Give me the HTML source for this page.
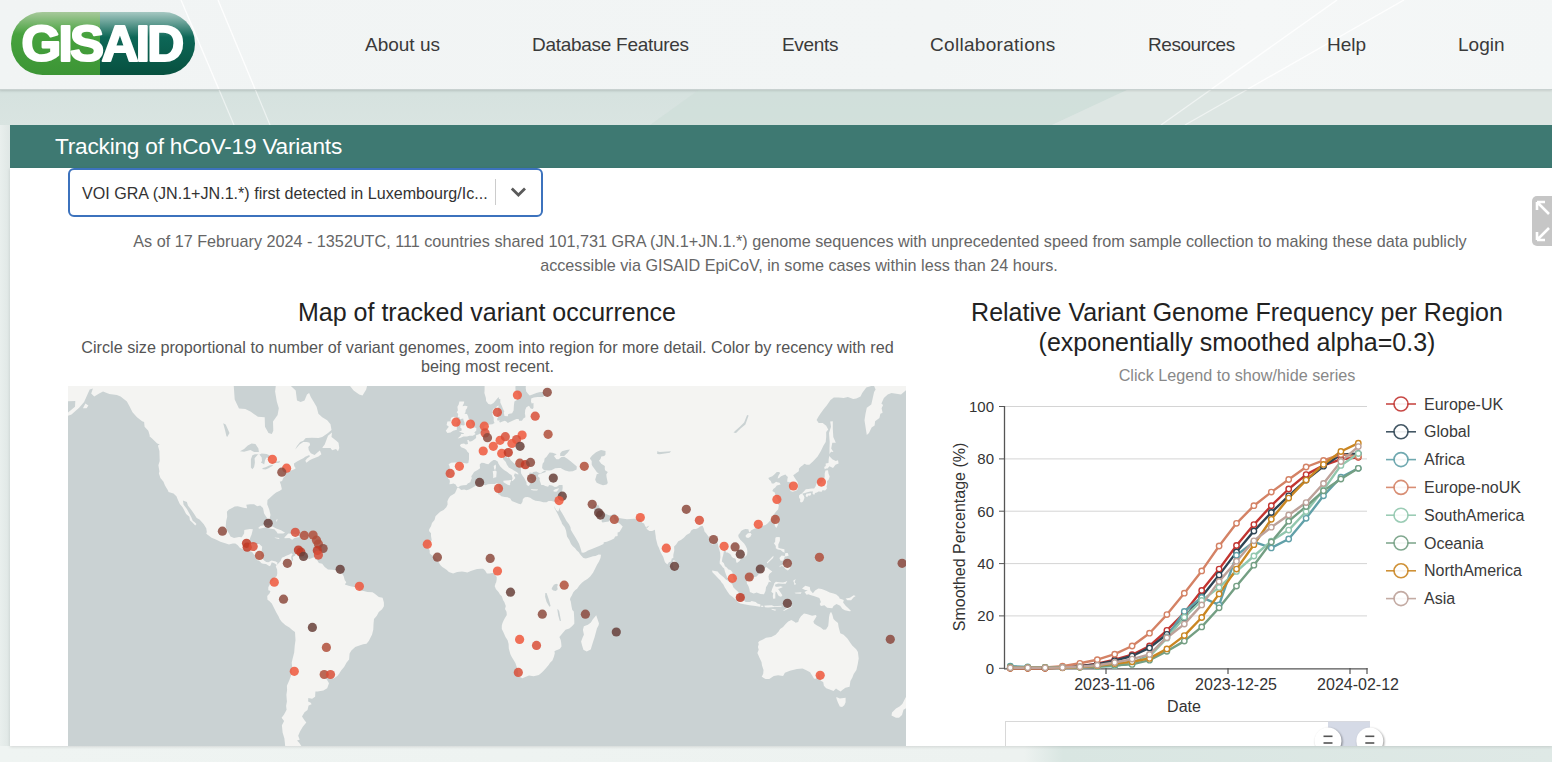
<!DOCTYPE html>
<html><head><meta charset="utf-8">
<style>
*{margin:0;padding:0;box-sizing:border-box}
html,body{width:1552px;height:762px;overflow:hidden}
body{font-family:"Liberation Sans",sans-serif;background:#e3ebe9;position:relative}
.abs{position:absolute}
#bg{left:0;top:0;width:1552px;height:762px}
#hdr{left:0;top:0;width:1552px;height:90px;background:linear-gradient(100deg,#f1f4f4 0%,#f2f5f5 60%,#f5f7f7 80%,#f3f6f6 100%);border-bottom:1px solid #c8d1d0;box-shadow:0 1px 2px rgba(0,0,0,.1)}
.nav{top:34px;font-size:19px;color:#3a3a3a;white-space:nowrap;line-height:22px}
#logo{left:11px;top:12px;width:184px;height:63px;border-radius:32px;overflow:hidden}
#teal{left:10px;top:125px;width:1542px;height:43px;background:#3e7972}
#ttl{left:55px;top:133.5px;font-size:22.6px;letter-spacing:-0.2px;color:#fff;line-height:26px;white-space:nowrap}
#panel{left:10px;top:168px;width:1542px;height:578px;background:#fff;box-shadow:0 1px 3px rgba(0,0,0,.12)}
#dd{left:67.5px;top:167.5px;width:475.5px;height:49px;border:2.2px solid #3c72bd;border-radius:6px;background:#fff}
#ddt{left:82px;top:184px;font-size:16.1px;color:#333;white-space:nowrap;line-height:18px}
#ddsep{left:495px;top:179px;width:1px;height:26px;background:#ccc}
#exp{left:1532px;top:196px;width:30px;height:50px;border-radius:5px;background:#c6c6c6}
.desc{font-size:16.2px;color:#666;white-space:nowrap;line-height:18px;text-align:center}
.h2{font-size:25px;color:#222;white-space:nowrap;line-height:28px;text-align:center}
.sub{font-size:16.2px;color:#555;white-space:nowrap;line-height:19px;text-align:center}
#map{left:68px;top:386px;width:838px;height:360px;background:#cad2d3;overflow:hidden}
</style></head>
<body>
<div class="abs" style="left:0;top:89px;width:1552px;height:36px;background:linear-gradient(180deg,#ccd9d6 0,#d6e2df 5px,#d9e4e1 100%)"></div>
<div class="abs" style="left:0;top:125px;width:10px;height:637px;background:linear-gradient(90deg,#e9efed 0,#dfe7e5 100%)"></div>
<div class="abs" style="left:0;top:746px;width:1552px;height:16px;background:linear-gradient(90deg,#eff4f2 0,#edf2f0 66%,#d9e6e2 68.5%,#dfe9e6 100%)"></div>
<svg class="abs" style="left:0;top:0" width="1552" height="762">
 <path d="M700,89 L1129,89 L1052,125 L650,125Z" fill="#cfdeda" opacity="0.8"/><path d="M1129,89 L1052,125 L1552,125 L1552,89Z" fill="#dde6e3"/>
 <line x1="181" y1="0" x2="234" y2="125" stroke="#fff" stroke-width="1.2" opacity="0.55"/>
 <line x1="218" y1="0" x2="270" y2="125" stroke="#fff" stroke-width="1.2" opacity="0.55"/>
 <line x1="1337" y1="0" x2="1161" y2="125" stroke="#fff" stroke-width="1.2" opacity="0.55"/>
 <line x1="1404" y1="0" x2="1185" y2="125" stroke="#fff" stroke-width="1.2" opacity="0.55"/>
</svg>
<div id="hdr" class="abs"></div>
<svg class="abs" style="left:0;top:0" width="1552" height="89">
 <line x1="181" y1="0" x2="218.7" y2="89" stroke="#fff" stroke-width="1.3" opacity="0.9"/>
 <line x1="218" y1="0" x2="255" y2="89" stroke="#fff" stroke-width="1.3" opacity="0.9"/>
 <line x1="1337" y1="0" x2="1211.6" y2="89" stroke="#fff" stroke-width="1.3" opacity="0.9"/>
 <line x1="1404" y1="0" x2="1248" y2="89" stroke="#fff" stroke-width="1.3" opacity="0.9"/>
</svg>
<div id="logo" class="abs">
 <svg width="184" height="63" viewBox="0 0 184 63">
  <defs>
   <linearGradient id="lg1" x1="0" y1="0" x2="0" y2="1">
    <stop offset="0" stop-color="#a7c99b"/><stop offset="0.35" stop-color="#47a23e"/><stop offset="1" stop-color="#3c9535"/>
   </linearGradient>
   <linearGradient id="lg2" x1="0" y1="0" x2="0" y2="1">
    <stop offset="0" stop-color="#a6c8c2"/><stop offset="0.4" stop-color="#0d6757"/><stop offset="1" stop-color="#07503f"/>
   </linearGradient>
  </defs>
  <rect x="0" y="0" width="89" height="63" fill="url(#lg1)"/>
  <rect x="89" y="0" width="95" height="63" fill="url(#lg2)"/>
  <text x="10.5" y="48.6" font-family="Liberation Sans" font-weight="bold" font-size="50" fill="#fff" stroke="#fff" stroke-width="2.2" stroke-linejoin="round" letter-spacing="-2.6" textLength="160" lengthAdjust="spacingAndGlyphs">GISAID</text>
 </svg>
</div>
<div class="abs nav" style="left:365px">About us</div>
<div class="abs nav" style="left:532px;letter-spacing:-0.28px">Database Features</div>
<div class="abs nav" style="left:782px;letter-spacing:-0.3px">Events</div>
<div class="abs nav" style="left:930px;letter-spacing:0.3px">Collaborations</div>
<div class="abs nav" style="left:1148px;letter-spacing:-0.45px">Resources</div>
<div class="abs nav" style="left:1327px">Help</div>
<div class="abs nav" style="left:1458px">Login</div>

<div id="teal" class="abs"></div>
<div id="ttl" class="abs">Tracking of hCoV-19 Variants</div>
<div id="panel" class="abs"></div>
<div id="dd" class="abs"></div>
<div id="ddt" class="abs">VOI GRA (JN.1+JN.1.*) first detected in Luxembourg/Ic...</div>
<div id="ddsep" class="abs"></div>
<svg class="abs" style="left:510px;top:186px" width="17" height="12" viewBox="0 0 17 12"><path d="M1.8 2.6 L8.4 9 L15 2.6" stroke="#5a5a5a" stroke-width="2.8" fill="none"/></svg>
<div id="exp" class="abs"></div>
<svg class="abs" style="left:1532px;top:196px" width="20" height="50" viewBox="0 0 20 50"><g stroke="#fff" stroke-width="2.6" fill="none"><path d="M5 6 L17 18 M5 6 L5 14 M5 6 L13 6"/><path d="M5 44 L17 32 M5 44 L5 36 M5 44 L13 44"/></g></svg>

<div class="abs desc" style="left:0;width:1600px;top:232px">As of 17 February 2024 - 1352UTC, 111 countries shared 101,731 GRA (JN.1+JN.1.*) genome sequences with unprecedented speed from sample collection to making these data publicly</div>
<div class="abs desc" style="left:0;width:1598px;top:255.5px">accessible via GISAID EpiCoV, in some cases within less than 24 hours.</div>

<div class="abs h2" style="left:287px;width:400px;top:298px">Map of tracked variant occurrence</div>
<div class="abs sub" style="left:0;width:975px;top:338px">Circle size proportional to number of variant genomes, zoom into region for more detail. Color by recency with red</div>
<div class="abs sub" style="left:0;width:975px;top:357px">being most recent.</div>

<div id="map" class="abs"><svg width="838" height="360" viewBox="0 0 838 360" style="position:absolute;left:0;top:0"><g><path d="M-36.8,-93.9 -19.2,-24.8 -11.6,-15.8 -1.5,-15.8 -11.6,-5.0 -14.1,0.9 -5.3,9.1 -3.5,15.5 7.3,15.1 7.0,20.8 -1.5,27.7 -10.3,33.4 3.5,28.6 11.1,21.7 16.1,16.0 19.9,7.6 21.7,3.5 24.9,2.5 23.2,7.6 26.2,10.6 31.2,7.6 35.0,5.6 41.3,8.1 48.9,9.1 52.6,10.6 58.9,15.5 61.5,20.3 64.5,26.3 69.0,31.2 74.1,35.2 76.1,36.0 76.6,40.7 80.3,44.8 81.6,48.9 82.9,50.9 87.9,54.8 91.7,58.6 89.9,59.4 91.4,65.0 91.7,75.0 90.4,79.2 91.4,85.3 90.9,87.6 92.4,91.9 95.5,95.7 97.0,99.5 100.0,104.5 100.5,106.0 105.5,107.5 108.6,110.6 109.1,112.1 110.3,114.7 111.8,118.0 114.4,120.9 116.6,124.9 118.1,128.0 121.4,130.8 121.9,134.2 124.7,136.7 127.2,139.4 128.5,138.0 126.2,135.8 124.9,135.0 123.2,131.1 121.2,127.2 118.9,122.9 115.6,118.8 114.9,114.4 118.9,115.9 119.9,119.4 123.2,123.8 125.7,127.2 128.7,132.0 131.5,133.6 135.8,138.3 138.3,142.4 138.8,145.9 138.3,147.8 141.3,149.9 143.6,151.8 148.4,153.7 152.4,155.8 157.2,157.3 161.0,158.6 164.7,157.6 167.3,157.6 169.8,159.2 171.8,161.8 174.8,163.3 178.6,164.4 182.4,165.2 184.1,165.9 185.6,168.0 187.9,170.6 188.2,172.6 189.7,174.4 190.9,174.4 193.5,177.2 195.2,177.7 198.0,178.0 201.5,180.3 202.5,179.5 203.8,176.2 206.8,177.5 208.6,179.0 209.6,176.7 207.8,175.4 203.5,174.4 200.5,176.2 198.2,175.9 196.2,174.4 194.0,172.1 192.9,169.5 193.5,166.4 194.2,160.7 191.2,158.1 187.4,157.9 182.9,158.1 181.6,158.6 181.6,153.9 182.4,151.3 183.6,148.6 184.9,143.2 181.9,143.0 176.3,144.0 176.1,147.5 173.8,151.3 171.0,151.0 166.0,152.1 162.5,150.5 161.0,147.5 158.9,144.3 157.7,140.5 158.2,135.0 159.2,130.8 158.9,125.8 160.7,123.8 164.5,121.7 166.7,120.6 169.8,120.3 173.6,121.2 176.8,122.0 179.1,122.3 178.3,118.8 182.1,118.3 186.1,118.3 189.2,120.3 192.2,119.4 195.0,122.0 195.7,125.2 196.0,127.2 198.0,130.6 199.7,133.1 201.5,133.1 202.5,128.9 201.3,123.8 199.2,118.3 199.5,114.1 202.0,111.8 205.0,109.0 208.1,106.6 211.8,104.8 213.9,103.2 212.8,98.6 211.8,95.7 214.1,95.1 215.1,92.2 217.4,89.6 217.6,86.9 220.2,85.6 223.9,84.3 226.4,83.3 227.7,82.3 226.2,79.9 225.9,77.5 229.0,75.4 232.7,73.6 235.3,72.2 237.3,70.8 241.3,69.0 241.8,70.4 239.0,72.6 237.3,74.7 238.5,76.8 241.6,74.3 244.1,72.9 247.9,71.5 250.4,70.4 253.4,68.3 251.9,64.6 249.1,66.8 246.6,69.0 242.8,67.2 240.8,64.2 240.3,60.9 242.1,59.0 241.6,56.7 238.8,55.9 235.3,55.9 231.5,58.6 227.2,63.5 229.0,60.1 232.2,55.9 235.3,54.8 237.8,52.0 244.1,51.7 250.4,52.0 254.2,50.9 259.7,47.3 263.5,44.0 262.5,38.2 259.2,34.3 254.2,31.2 250.4,27.7 248.6,20.8 245.8,16.0 242.8,11.1 241.1,7.1 239.0,8.6 236.5,14.6 232.7,16.0 229.0,14.6 227.7,4.5 222.7,-0.2 215.1,-3.4 207.6,-4.5 202.5,-51.8 252.9,-93.9ZM254.4,61.6 256.7,58.6 258.4,54.0 260.0,49.7 264.0,46.5 263.5,50.9 268.0,54.4 270.5,56.7 271.3,62.0 270.0,65.3 268.0,63.1 264.2,64.2 262.5,62.0 254.7,62.0ZM208.6,179.0 210.6,177.2 212.6,174.9 213.9,171.8 216.4,170.8 217.6,170.0 221.4,168.5 223.2,167.2 224.7,168.2 223.4,170.3 223.2,172.1 223.9,175.4 225.2,173.9 224.7,171.1 227.2,169.5 227.7,167.7 229.7,169.5 232.7,171.8 237.8,171.8 241.6,172.9 245.3,171.6 248.1,171.6 246.6,172.9 249.1,173.9 250.9,177.0 254.2,177.7 256.7,181.0 260.0,183.6 264.2,183.8 268.0,184.3 271.8,186.1 274.3,187.9 275.6,189.9 276.8,194.2 278.3,196.2 276.8,198.4 280.6,199.7 283.6,200.5 288.2,201.2 291.9,204.5 295.7,205.0 299.5,206.0 304.5,206.3 307.1,208.0 310.8,211.1 314.6,211.8 315.9,216.4 315.9,220.2 314.1,223.3 310.8,226.1 308.8,229.7 306.0,233.0 305.5,238.2 305.3,243.5 304.0,248.8 302.8,250.9 300.8,255.0 298.5,257.7 295.2,258.3 291.4,259.4 287.2,261.0 283.4,264.6 281.6,267.4 281.1,273.4 278.6,276.5 276.1,280.9 273.1,284.5 271.3,287.4 269.3,289.9 265.7,292.6 262.5,292.6 258.4,291.4 256.7,290.5 259.4,294.5 261.0,297.3 259.2,302.3 255.4,304.6 249.6,305.5 247.4,305.5 247.1,310.8 244.1,312.8 240.3,312.1 240.1,315.5 242.8,316.8 243.6,318.2 240.6,319.6 239.5,324.1 236.5,326.3 234.0,330.6 236.5,334.3 238.3,336.5 234.8,340.7 232.0,345.4 230.2,349.7 231.7,353.8 229.0,354.6 231.2,356.7 234.0,361.0 239.8,364.0 237.8,388.8 220.2,388.8 216.4,352.6 214.6,346.5 213.9,339.2 216.1,335.0 213.6,331.7 215.9,328.8 218.6,323.8 218.1,319.9 218.9,315.5 218.4,308.8 219.1,303.9 218.9,299.8 221.2,294.5 222.9,289.9 223.7,286.8 224.2,280.9 223.7,276.8 224.7,272.2 226.2,266.6 226.7,259.9 227.5,254.2 227.0,245.9 224.2,244.0 221.4,241.6 217.6,239.3 213.9,236.1 211.8,233.3 210.6,230.4 208.3,226.6 205.8,221.5 203.8,217.6 201.3,215.1 199.5,213.8 199.2,210.0 201.5,207.5 202.5,205.0 200.3,204.2 200.3,201.2 202.3,197.4 202.5,196.2 205.0,194.4 206.0,192.4 208.8,189.9 209.3,187.4 209.1,183.6 207.8,180.5 208.6,179.0ZM294.5,9.6 298.2,3.5 300.8,-7.2 303.3,-18.7 328.5,-51.8 252.9,-152.9 265.5,-51.8 275.6,-18.7 280.6,-1.8 285.6,4.5 291.2,8.6ZM190.2,142.1 192.4,140.0 197.5,138.9 201.3,139.1 205.0,140.8 208.8,142.7 213.1,144.3 217.1,146.7 215.1,147.5 209.6,147.5 208.6,145.7 206.3,143.2 201.3,142.4 198.0,141.3 195.0,141.9 191.4,142.7ZM216.4,151.5 220.2,147.5 223.4,147.8 227.7,148.1 230.2,149.4 231.7,151.0 229.0,151.5 226.4,152.1 224.2,153.7 221.4,152.1 216.6,152.3ZM206.5,151.5 211.8,152.1 210.6,153.1 207.1,152.1ZM234.5,151.3 238.8,151.5 238.3,152.6 234.8,152.6ZM416.4,-93.9 416.6,-1.8 416.6,3.5 416.4,7.1 417.9,12.1 418.1,15.1 420.4,17.9 422.9,18.4 425.5,17.0 428.0,14.1 430.5,11.1 431.2,13.1 432.3,13.1 432.3,16.5 434.0,20.3 434.8,22.6 436.3,25.4 435.8,26.8 436.5,29.9 439.8,30.3 440.3,28.1 444.1,27.2 445.6,24.5 445.9,19.4 446.4,15.5 448.9,14.1 450.9,11.1 449.9,7.6 447.6,5.1 447.4,1.4 447.9,-3.4 450.6,-7.2 455.2,-11.2 458.2,-16.4 460.7,-23.6 465.8,-23.6 467.8,-19.3 468.0,-15.8 466.0,-12.9 462.0,-8.9 458.2,-5.6 457.7,1.9 458.2,5.6 460.2,8.1 461.7,9.6 464.5,8.6 468.3,7.1 472.1,6.1 475.1,6.1 477.8,8.6 480.1,9.1 477.1,9.6 474.6,11.1 469.5,11.1 465.8,11.6 463.2,12.6 463.0,15.5 463.7,17.5 465.5,17.0 465.5,21.7 464.7,23.1 462.7,22.6 461.0,19.8 458.4,21.2 457.2,24.0 456.9,27.7 457.2,29.0 457.4,31.2 455.4,32.6 453.9,34.7 451.1,34.7 450.6,33.0 448.4,33.0 445.6,34.3 441.8,36.0 439.8,36.9 438.3,35.6 436.8,34.7 434.5,35.6 432.3,36.4 431.2,36.0 431.7,34.3 429.7,34.7 429.0,33.0 430.2,31.2 428.7,29.5 430.0,26.8 431.5,25.9 430.0,24.5 430.2,21.7 430.7,19.4 429.0,20.3 427.7,22.6 425.7,22.6 424.7,24.0 424.4,27.7 424.7,29.9 425.7,31.7 425.7,34.7 426.5,36.9 424.4,38.2 421.7,38.6 419.4,38.6 416.6,39.8 415.9,42.8 414.4,44.8 412.6,47.3 410.3,48.5 408.1,49.3 408.1,52.0 406.6,53.2 404.5,54.8 402.8,55.6 400.8,55.2 400.8,54.0 399.3,54.0 400.0,57.9 397.7,58.6 396.0,57.5 393.0,57.9 391.9,59.4 393.2,61.3 396.5,62.4 398.5,63.9 399.0,65.3 401.0,67.2 401.0,69.7 401.0,73.3 400.3,77.1 398.5,77.5 394.5,76.8 390.2,76.4 386.4,76.4 383.1,76.8 380.6,78.2 381.6,80.6 381.9,83.6 382.1,86.9 380.1,90.9 380.1,92.8 381.6,93.5 381.9,95.4 381.4,98.2 383.4,97.9 385.4,97.6 387.7,98.6 388.4,100.1 389.9,101.4 392.5,99.8 395.2,99.2 398.5,98.9 400.0,97.3 402.3,96.3 403.0,93.8 403.8,92.2 403.3,90.2 404.5,88.6 406.1,85.9 407.8,84.9 409.6,83.9 412.1,82.3 411.8,80.2 411.8,78.2 413.6,76.8 416.1,77.1 417.9,77.8 420.4,78.2 422.9,75.7 425.5,74.0 427.2,74.0 429.7,75.4 430.5,77.8 432.3,80.6 434.8,82.9 436.8,84.6 439.3,85.9 441.6,87.9 443.6,88.9 444.6,92.2 443.6,95.1 444.6,95.1 445.9,93.8 447.4,91.9 445.9,89.6 446.9,87.3 450.1,88.6 450.6,87.9 449.1,86.3 445.9,84.6 444.1,83.3 440.8,81.6 438.8,78.5 437.8,76.1 435.0,72.9 435.3,70.1 437.3,69.0 438.8,69.3 438.3,71.1 439.3,72.2 440.6,70.8 442.6,74.0 445.4,76.8 447.6,78.5 450.6,80.6 452.9,82.3 452.9,85.3 453.2,87.6 454.7,89.9 456.2,91.9 457.2,94.1 458.4,96.3 458.7,98.9 460.7,100.1 462.0,98.2 461.5,96.3 463.2,97.0 464.5,95.1 463.0,93.5 461.0,92.2 462.7,90.9 461.2,87.9 461.7,86.6 464.2,86.9 465.3,85.9 468.3,85.6 470.3,86.6 471.3,87.3 472.8,87.3 475.1,85.6 477.3,84.6 477.8,85.9 473.3,87.6 470.3,88.6 469.8,90.2 471.8,91.9 471.5,93.8 472.6,97.0 473.3,98.9 475.3,98.9 477.3,100.1 480.1,100.8 481.1,98.9 484.1,99.5 486.7,101.1 488.9,100.8 491.2,98.9 494.5,98.9 494.7,101.4 494.5,103.2 493.7,106.9 492.7,110.3 492.0,112.1 490.9,114.7 490.2,115.9 487.4,116.2 485.4,115.6 483.4,115.0 480.6,115.0 478.6,116.2 475.3,116.2 471.8,115.3 467.5,114.7 464.7,113.5 462.2,111.8 459.5,110.9 456.9,111.2 454.9,112.9 454.4,115.9 452.9,118.3 450.6,117.7 447.6,116.5 443.8,115.0 442.3,112.6 439.6,111.2 436.8,110.9 433.3,110.3 431.7,108.7 430.0,108.1 430.0,106.6 431.5,103.6 431.0,102.3 430.0,100.1 431.7,97.9 429.7,97.6 428.7,97.3 426.7,97.9 422.7,97.9 419.9,98.2 417.4,99.2 413.9,98.6 410.6,99.5 407.6,99.8 404.3,101.7 401.0,103.6 398.5,104.2 396.2,103.6 393.2,103.9 390.7,101.7 389.2,102.0 388.2,104.5 386.9,107.2 384.6,108.7 382.4,110.0 380.6,112.4 379.4,115.3 379.6,118.5 378.3,121.2 375.6,124.0 372.6,125.5 370.8,126.9 367.5,130.3 366.5,133.9 364.0,136.9 363.0,140.2 361.2,143.2 361.0,145.1 363.0,147.3 363.0,149.9 363.7,153.9 362.7,156.5 360.7,160.7 360.0,161.3 361.7,164.4 361.7,167.2 363.5,169.0 365.5,170.3 367.5,172.1 369.8,173.9 370.5,175.9 372.3,179.0 374.3,181.0 376.3,182.3 378.8,184.1 380.9,186.1 385.1,187.6 389.2,186.1 394.0,185.6 397.2,186.1 399.3,186.6 402.8,185.1 406.6,183.8 409.1,183.1 412.9,182.8 415.1,182.8 417.1,184.6 418.9,187.6 421.4,187.6 424.2,187.1 425.7,187.1 427.2,188.9 428.7,190.9 428.7,193.2 428.2,196.2 427.5,197.4 426.7,200.2 428.0,203.2 430.5,206.0 432.0,208.5 433.8,210.3 434.8,213.3 435.0,214.1 436.3,216.1 437.8,219.9 437.0,223.0 438.5,225.8 438.8,228.9 436.5,232.8 435.5,234.8 434.5,236.9 433.8,239.5 433.8,243.0 435.3,246.1 437.5,250.9 439.6,254.2 440.6,258.0 440.8,262.4 442.3,268.0 443.6,270.8 445.6,273.9 447.4,277.1 448.4,280.0 449.9,283.9 450.1,287.1 450.4,290.2 452.9,291.4 454.4,292.3 457.2,291.1 461.0,289.6 465.5,290.2 468.8,289.6 470.8,289.0 473.3,287.1 475.6,284.8 478.1,282.1 480.6,279.1 482.1,276.8 484.4,274.5 485.9,270.8 486.9,266.8 486.2,265.7 487.7,264.6 491.7,262.9 493.5,260.5 493.2,256.9 492.7,253.9 491.4,250.9 494.5,247.2 497.5,243.7 501.3,242.4 504.0,240.3 506.3,237.7 506.3,234.6 506.1,230.2 505.8,225.6 504.3,224.0 503.5,220.2 503.0,217.1 502.8,215.4 502.0,213.8 502.3,212.1 503.8,209.5 505.3,206.3 507.3,204.0 509.1,202.7 511.3,199.5 513.9,196.7 516.4,194.7 519.4,192.9 522.2,190.4 525.0,186.8 527.2,182.5 529.0,178.7 531.0,175.4 532.5,172.1 533.0,168.8 530.7,168.5 527.5,170.0 525.0,170.3 521.2,171.6 517.9,172.4 515.4,172.1 513.1,169.5 512.1,168.2 510.6,165.9 508.8,164.4 507.1,162.3 504.8,160.2 503.0,158.1 501.3,153.9 499.0,150.5 498.0,144.6 496.7,141.3 494.0,137.8 493.5,136.1 492.2,133.6 490.4,129.4 488.9,126.6 486.7,122.6 486.2,119.7 486.7,120.9 487.9,123.8 490.2,125.8 490.9,124.0 492.2,120.9 492.0,123.8 494.2,127.2 496.2,130.8 498.5,135.0 501.0,138.3 502.5,141.3 502.8,143.8 504.8,147.3 507.3,151.3 509.6,155.2 511.1,158.1 512.1,161.0 513.1,164.1 513.6,166.4 515.4,166.7 517.6,165.9 519.9,164.6 523.9,163.1 527.5,161.5 531.2,160.0 535.5,158.1 535.8,156.3 538.8,155.8 543.1,153.9 546.1,152.6 547.1,150.5 549.6,149.9 549.6,146.5 551.4,145.9 552.7,144.0 554.7,140.5 553.2,139.1 551.7,137.5 549.4,136.7 547.1,135.0 545.9,132.5 545.9,130.3 545.1,130.6 543.8,132.2 542.6,133.6 540.8,135.6 537.5,136.1 534.5,136.4 533.5,135.3 534.0,133.1 533.8,130.8 532.5,130.8 531.8,132.8 531.5,133.9 530.5,132.0 530.0,128.9 527.7,126.6 526.2,123.8 525.0,121.4 525.5,119.7 527.2,118.5 529.0,119.4 530.2,118.8 531.5,121.4 533.3,125.2 535.8,126.9 539.1,128.6 541.6,129.4 543.8,128.9 545.9,127.7 547.6,128.3 548.4,131.1 551.4,132.0 553.9,132.5 559.0,133.3 562.5,133.1 565.8,132.8 569.8,132.8 572.1,132.5 573.3,134.2 574.1,136.7 576.1,137.5 577.3,140.5 578.4,141.1 581.4,139.4 579.4,141.9 577.9,141.3 579.1,143.2 581.4,145.1 584.1,145.1 586.9,143.8 587.2,147.0 587.7,149.9 587.9,152.6 588.9,156.5 589.7,159.4 590.7,161.3 592.2,165.2 594.0,168.8 595.2,170.8 596.2,173.9 597.0,176.2 599.3,178.5 601.0,176.2 603.0,175.4 603.8,172.6 605.3,172.1 605.3,169.0 606.3,164.6 606.1,160.5 608.1,158.4 610.3,155.2 612.9,153.9 615.9,151.8 618.4,148.9 621.9,147.0 623.2,144.6 625.5,143.0 628.0,143.0 630.2,141.9 632.0,140.5 634.5,139.7 635.8,142.4 636.5,145.4 638.3,147.5 640.1,149.9 641.6,152.1 642.3,155.8 643.1,158.1 644.9,158.6 647.1,156.5 648.9,155.5 649.9,157.9 650.4,160.7 651.4,163.9 652.2,167.0 652.4,171.3 651.7,175.4 651.7,177.7 652.9,178.7 654.7,181.3 656.2,182.5 656.9,185.6 658.0,188.6 659.2,191.4 662.2,193.9 664.5,195.2 666.5,195.2 665.5,192.9 664.5,189.1 664.5,186.3 662.5,184.1 660.5,183.6 658.5,181.3 656.9,180.3 655.9,177.2 653.9,175.4 654.4,172.1 655.2,169.0 655.7,166.4 655.9,164.6 657.5,164.4 658.2,166.4 659.7,166.4 661.7,167.7 663.0,169.0 663.7,170.8 665.3,172.1 667.3,172.4 668.0,174.1 668.3,176.4 669.3,176.7 671.6,174.9 673.1,172.6 675.6,171.6 678.1,170.0 679.1,168.2 679.4,165.2 678.9,162.6 677.6,159.7 676.1,157.6 674.1,155.5 672.3,153.7 670.5,151.0 670.3,149.1 672.1,146.7 673.1,145.1 675.1,143.8 677.4,143.0 680.4,143.2 680.9,145.4 681.9,146.5 682.9,144.6 685.2,143.2 688.2,142.1 690.2,141.3 692.0,140.5 694.7,139.7 697.5,139.1 699.5,137.5 701.8,135.0 703.3,133.6 705.1,131.7 705.3,129.1 706.8,127.2 708.3,125.2 710.1,123.5 710.6,120.9 710.9,119.1 709.6,117.7 711.1,116.5 710.1,114.1 708.6,111.8 707.6,109.7 706.8,106.6 704.3,105.1 705.3,102.9 707.3,101.4 708.8,99.5 712.6,98.6 711.6,96.7 709.3,96.3 708.1,95.7 705.8,97.6 703.8,97.6 702.8,95.1 701.3,93.8 700.3,91.9 701.8,91.2 704.3,90.2 706.3,88.6 708.8,85.9 711.1,85.9 712.1,86.9 710.3,89.9 709.6,92.5 711.1,91.9 713.1,90.2 715.4,89.2 717.4,88.6 718.7,89.9 719.9,90.9 719.4,93.1 719.2,95.7 721.2,96.0 722.9,96.7 722.7,98.9 722.7,102.3 722.4,105.1 724.7,105.7 727.0,105.1 729.0,104.2 730.0,102.3 730.2,99.2 729.7,96.3 728.0,93.8 726.5,91.5 725.2,89.2 727.0,87.9 729.0,86.6 730.8,85.3 731.0,82.6 733.0,80.6 734.5,79.5 736.5,77.8 738.6,78.8 741.3,78.8 744.9,75.4 749.6,70.4 752.9,65.0 755.4,59.8 757.7,55.9 758.2,50.9 758.2,46.0 760.2,43.6 758.2,39.8 754.7,36.9 750.7,36.9 748.6,33.9 750.4,30.8 752.7,27.2 755.4,23.6 758.7,19.4 762.5,14.1 765.8,11.6 770.8,11.6 775.6,12.1 779.9,11.1 785.2,13.1 788.4,12.6 792.5,10.6 794.2,7.1 798.3,1.4 805.8,-0.7 807.6,3.5 806.1,6.1 803.3,18.4 798.8,21.7 797.5,27.7 796.5,34.3 797.8,42.8 798.8,48.9 801.0,46.9 803.6,41.5 806.6,39.4 807.1,35.2 811.4,32.1 812.4,27.7 814.6,26.8 813.6,22.2 815.1,18.9 813.4,17.5 815.9,12.1 819.7,8.6 823.5,7.1 833.0,8.6 838.8,3.5 844.9,-1.8 857.5,-18.7 882.6,-152.9ZM389.7,52.4 392.7,51.7 395.5,50.5 399.0,50.5 401.5,49.7 404.8,49.7 407.6,48.1 406.3,46.5 408.3,44.4 408.3,41.9 405.3,41.1 404.5,38.6 403.5,36.4 402.5,34.3 400.8,33.0 400.0,29.9 399.0,28.1 396.5,27.7 397.5,26.3 397.7,24.0 399.0,22.2 399.5,20.3 397.0,19.8 394.5,20.3 396.0,17.0 396.2,15.5 391.4,15.5 390.7,18.4 389.4,20.8 389.9,24.5 388.7,26.3 390.2,28.1 389.7,30.8 391.9,31.7 391.4,33.4 393.0,33.0 395.2,32.6 395.5,34.3 396.5,36.4 396.7,39.0 395.5,39.4 392.7,39.0 392.2,41.5 393.7,42.8 393.5,44.8 390.9,45.6 393.5,46.5 396.0,47.3 395.5,48.1 393.2,48.1 392.5,49.7 390.2,52.0ZM388.7,44.0 388.9,40.7 388.4,39.0 388.7,36.4 390.2,35.2 389.4,32.6 387.7,31.2 385.7,30.8 383.1,31.7 382.4,33.9 383.1,35.2 379.4,35.6 378.6,39.0 380.9,40.7 379.4,42.4 377.8,44.8 379.4,46.9 382.6,46.5 385.1,44.8 387.9,44.0ZM435.3,94.8 437.8,94.4 443.3,94.1 442.1,97.3 442.1,99.2 440.1,98.9 435.5,96.3ZM424.7,85.3 427.2,84.6 428.7,85.6 428.2,91.2 426.7,91.5 425.2,92.2 425.2,88.6ZM425.7,79.9 427.7,78.5 428.0,81.2 427.2,83.9 426.2,83.3ZM463.2,102.9 465.3,103.2 470.3,103.6 469.0,104.5 465.8,104.6 463.2,103.9ZM485.4,104.5 487.2,103.2 491.2,102.3 489.7,104.5 488.4,105.7 485.7,105.4ZM733.8,107.5 735.3,106.0 737.8,103.2 740.3,102.9 743.6,102.6 746.1,102.6 747.4,100.8 748.6,97.3 749.9,97.0 749.6,98.9 752.9,97.3 755.4,94.4 756.7,90.9 756.7,87.6 757.5,84.6 760.0,84.3 760.5,87.6 761.7,90.6 760.5,94.1 759.0,95.1 759.2,98.2 758.5,100.8 759.0,102.3 757.5,104.2 756.2,104.5 754.7,103.9 753.7,105.7 750.4,105.4 748.9,106.6 747.1,106.9 746.1,109.0 744.4,107.2 745.1,105.4 742.3,105.4 739.3,106.3 737.1,106.9 734.8,107.5 734.0,107.8ZM731.0,109.4 733.0,107.8 734.3,107.8 735.8,109.7 736.5,111.8 735.3,115.0 734.5,115.9 733.0,116.5 732.0,115.6 732.3,113.5 731.0,111.5ZM737.6,110.0 738.3,107.8 740.3,107.5 742.6,106.9 743.3,108.1 742.1,109.7 740.3,109.4 739.1,111.2ZM756.7,83.3 758.2,82.6 759.5,82.6 761.5,80.2 765.0,81.9 767.5,78.8 770.6,77.5 770.0,74.3 767.8,75.0 764.3,73.3 761.2,70.1 760.7,73.3 760.5,77.1 757.7,77.5 757.7,79.9 756.2,80.9ZM761.5,67.9 763.0,65.7 765.5,66.1 763.2,62.4 764.3,56.7 767.8,56.7 765.3,50.9 764.8,42.8 764.8,35.2 762.2,35.6 763.0,40.7 761.0,46.9 761.7,55.9 761.5,62.4ZM706.6,139.1 707.8,135.0 710.1,132.8 711.4,133.6 710.3,136.9 709.6,139.7 708.3,142.1 707.1,140.2ZM677.6,149.4 679.9,147.3 682.6,147.0 683.6,148.3 682.4,150.7 680.1,152.1 677.9,151.3ZM707.8,151.3 710.1,151.0 711.9,151.3 711.9,154.7 710.3,158.4 710.3,161.8 712.6,162.6 716.4,163.3 716.6,166.7 714.6,165.7 712.6,164.1 709.8,163.6 707.8,162.3 707.8,160.0 705.8,157.1 707.1,156.3 707.3,152.6ZM711.4,181.3 711.9,179.8 715.1,179.0 716.9,178.0 718.9,175.9 720.4,173.9 722.4,177.2 722.7,180.3 721.7,182.8 719.9,184.6 717.2,183.1 715.9,180.8 713.4,180.0ZM711.4,172.1 713.6,169.5 716.4,170.0 718.9,170.3 720.7,169.5 719.7,167.0 717.4,167.0 716.4,172.1 715.1,174.7 712.6,174.7ZM699.3,177.5 705.1,172.1 705.6,169.8 704.3,170.8 698.8,176.4ZM678.6,194.2 678.9,197.4 680.4,200.0 681.4,203.0 681.9,206.0 685.7,207.5 688.7,206.5 692.5,208.0 696.0,208.3 697.5,205.0 698.0,201.2 700.0,197.9 700.8,195.7 703.5,196.2 701.0,193.7 700.5,190.6 701.3,187.9 704.3,185.6 701.8,183.8 700.0,182.3 698.3,181.0 696.5,182.3 694.7,185.3 693.7,186.3 691.2,187.4 688.7,190.6 684.9,191.4 684.2,193.7 681.1,194.4ZM644.1,184.6 649.6,185.6 651.7,188.1 655.4,191.1 658.0,193.7 659.7,194.4 661.7,196.2 664.3,198.2 665.3,201.2 667.5,203.5 670.0,205.8 671.1,207.0 670.8,210.8 670.5,213.3 667.5,213.6 664.8,211.1 661.7,208.8 659.2,205.3 656.7,201.2 655.2,198.2 653.4,196.2 652.4,194.4 649.9,191.9 647.1,189.1 644.4,186.3ZM669.0,215.9 671.1,213.8 673.1,214.1 676.1,214.6 677.6,215.9 682.1,216.1 683.6,215.1 687.7,216.1 689.4,217.6 692.5,218.4 692.2,220.7 687.4,219.9 681.6,219.2 677.4,218.4 672.3,217.4 669.5,216.1ZM693.7,219.4 695.5,219.9 695.0,221.0 692.7,220.7ZM696.2,219.7 698.0,219.4 703.8,219.2 706.1,220.2 713.4,219.7 713.6,220.7 706.3,221.0 700.0,221.5 697.0,221.2ZM703.8,222.7 708.3,223.8 707.1,224.8 703.5,223.5ZM715.1,224.8 718.9,222.0 724.0,219.9 723.4,221.0 718.7,223.5 715.9,225.0ZM705.1,212.8 704.8,210.0 705.3,207.5 703.3,205.8 704.3,202.5 705.8,199.0 706.3,197.2 707.8,195.7 711.4,196.2 715.1,196.4 717.7,195.7 719.4,194.7 717.7,197.7 714.4,197.7 710.1,197.4 706.8,198.7 707.6,200.7 710.1,200.7 712.6,200.2 714.9,201.0 712.9,202.0 710.1,203.0 711.9,205.5 714.4,209.3 713.1,210.8 711.4,210.3 710.1,209.3 708.8,206.3 707.6,205.5 707.3,208.8 707.3,212.6ZM725.2,194.7 727.7,192.9 726.5,196.2 728.2,197.9 726.5,199.0 726.0,196.7ZM726.5,206.8 733.5,206.3 732.8,207.8 727.7,207.5ZM734.0,202.5 737.3,199.7 741.8,201.0 742.3,204.2 744.9,207.3 747.1,204.5 750.4,202.5 753.7,203.0 758.2,204.7 761.7,206.5 765.5,207.5 768.3,208.5 771.1,211.1 771.6,212.6 775.8,214.1 775.1,216.6 777.6,219.7 780.1,222.0 783.1,225.0 781.4,225.3 776.9,224.3 774.3,222.7 772.1,219.7 768.5,217.9 765.5,219.9 764.3,222.2 759.2,221.7 756.4,219.2 752.9,219.9 751.7,217.9 752.9,215.9 751.4,212.1 746.6,210.3 743.1,209.3 740.3,208.3 738.6,208.8 736.5,206.0 739.8,204.2 737.1,204.0 734.0,202.5ZM777.6,212.6 781.9,211.8 785.7,209.3 787.7,210.0 785.7,211.3 783.1,214.3 779.4,214.3ZM690.2,256.6 691.5,255.0 695.0,253.6 698.0,251.7 703.3,250.9 707.6,248.8 710.6,245.6 712.1,243.0 715.1,241.1 717.4,238.2 720.2,235.6 723.4,234.1 726.0,235.6 727.7,236.7 730.2,235.9 731.3,232.8 733.0,230.2 736.0,227.4 738.6,228.1 740.3,228.6 744.1,229.7 747.9,228.9 748.6,230.2 747.1,232.8 745.4,235.6 746.1,237.4 748.6,239.3 752.7,241.6 755.4,243.7 758.0,243.5 760.2,240.1 760.7,235.6 761.0,231.2 761.7,228.1 763.0,225.8 764.3,228.6 765.5,233.0 767.5,235.1 770.0,236.9 770.6,240.9 772.3,247.2 775.6,248.8 779.4,252.6 781.9,256.3 784.2,259.6 788.2,263.2 789.9,266.0 790.7,272.5 789.7,278.3 788.4,283.9 785.7,288.0 784.4,291.4 782.4,295.1 781.6,300.7 777.4,301.7 774.3,303.9 772.6,305.5 769.3,303.6 768.0,302.6 765.5,304.9 761.7,303.6 758.2,302.3 755.9,299.8 755.2,296.0 752.7,294.8 752.2,292.3 751.7,289.3 750.7,286.8 749.6,289.9 747.4,292.9 745.9,292.6 744.6,290.2 742.1,286.2 737.8,283.9 734.5,282.4 729.0,283.0 721.9,284.8 716.9,286.8 715.1,289.9 710.1,289.3 705.8,289.9 701.3,292.9 697.5,292.9 693.7,290.8 695.2,287.7 695.5,283.9 694.0,279.4 693.5,276.0 691.7,272.2 689.4,267.1 690.7,263.8 689.9,261.0 690.7,258.3ZM768.3,311.1 771.8,312.5 777.6,311.8 777.6,316.2 776.3,319.2 774.1,321.0 771.8,320.6 769.8,316.2 768.5,312.8ZM839.1,291.1 841.1,292.9 843.4,296.0 844.4,298.5 846.1,299.2 847.4,301.1 850.4,302.3 853.7,301.4 852.4,305.5 849.9,306.5 849.4,308.8 847.4,312.5 845.4,314.1 844.4,313.1 844.9,309.8 843.6,308.2 841.8,306.2 843.9,303.9 843.9,300.7 842.1,295.4 839.8,292.9ZM839.1,310.5 841.8,312.1 842.8,313.8 841.8,316.8 839.8,319.6 839.1,321.7 835.5,323.8 834.0,329.1 831.0,331.7 828.0,331.7 823.5,329.5 824.0,326.6 828.0,322.4 831.5,320.6 834.3,317.9 836.0,314.8 837.6,311.5ZM528.2,229.2 531.0,237.4 530.5,239.5 529.0,242.2 528.2,245.3 526.5,251.5 524.7,256.9 522.7,263.5 518.7,265.4 515.4,263.8 514.1,259.6 513.1,255.5 514.6,251.5 515.9,248.8 514.9,243.7 515.9,240.3 519.9,238.8 522.9,236.4 524.7,233.5 527.0,230.7ZM605.3,174.1 607.1,174.7 608.6,177.2 610.3,181.0 609.6,182.8 607.1,183.8 605.6,182.5 604.8,178.5 605.1,175.9ZM14.9,22.2 18.6,22.2 20.4,19.4 17.4,17.5ZM80.9,49.7 84.1,52.4 89.2,57.5 93.2,59.0 90.4,54.8 86.6,51.3 82.9,48.9ZM208.1,135.0 208.6,133.6 209.6,133.1 208.8,135.8Z" fill="#f4f4f2"/><path d="M162.2,-51.8 166.0,3.5 166.7,13.6 171.0,22.6 177.3,23.1 182.4,25.4 189.9,30.8 196.7,31.2 197.0,40.7 200.5,46.9 203.8,48.1 205.3,44.8 205.0,35.6 209.6,29.0 210.8,22.2 208.8,15.5 207.1,5.6 208.3,-4.5 207.6,-51.8ZM172.0,65.3 176.1,63.1 179.8,59.4 183.6,57.5 187.4,57.9 190.4,62.4 190.9,66.1 186.1,66.1 182.4,63.9 176.1,65.7ZM182.9,81.6 184.4,83.3 186.1,80.9 186.9,76.8 186.6,72.2 189.9,68.6 190.7,68.3 186.9,68.3 184.4,69.3 182.9,73.3 182.9,78.5ZM196.2,78.5 197.0,74.3 198.5,71.5 201.3,72.2 202.5,72.9 201.3,69.3 198.7,67.9 193.7,67.5 191.4,68.6 193.7,71.5 194.0,75.0 192.9,76.4 195.2,77.8ZM194.0,82.9 197.5,83.6 200.0,82.6 204.3,79.9 205.3,78.8 201.3,79.5 197.5,81.2 195.0,81.9ZM203.0,77.5 207.6,77.1 211.3,76.8 212.1,74.7 210.1,75.4 205.0,75.7 203.8,76.1ZM159.2,50.9 161.5,46.9 157.7,38.6 155.2,37.3 157.2,44.8 158.4,50.1ZM476.8,84.3 480.9,84.6 483.4,84.3 487.2,82.3 490.9,81.9 492.7,81.9 494.7,83.3 497.2,84.6 501.0,85.6 504.8,85.3 508.6,83.6 508.8,80.6 505.6,77.8 502.3,75.0 499.0,72.6 496.2,70.8 493.5,71.1 490.7,73.3 488.4,73.3 485.9,70.1 488.7,68.3 484.6,66.8 481.6,66.4 479.6,69.3 478.6,70.8 476.6,72.6 476.1,75.7 474.6,77.8 474.3,79.9 474.1,81.9 475.3,83.6ZM492.2,70.1 496.2,70.1 499.8,66.4 502.0,63.5 498.5,63.9 494.0,65.3 492.2,67.2ZM524.4,69.3 527.7,66.4 530.0,65.3 533.0,63.9 537.5,65.0 537.5,68.6 536.3,70.1 533.3,70.4 532.5,72.9 531.0,74.7 533.3,77.8 536.8,79.9 536.8,82.9 537.3,84.6 539.8,85.9 538.3,88.6 538.6,91.2 539.8,97.0 538.6,98.6 535.0,99.2 531.5,97.9 528.7,96.7 527.5,94.4 527.2,93.5 528.2,90.2 528.7,88.3 531.0,87.3 529.0,86.6 527.5,84.3 526.2,82.6 524.4,79.9 523.7,78.5 523.7,75.0 522.4,73.3 521.9,72.2 523.7,70.1ZM665.5,46.5 668.0,46.9 672.3,42.8 677.4,38.6 680.6,29.5 679.1,29.0 676.1,36.4 671.8,40.7 667.3,44.8ZM589.2,65.3 591.7,66.1 603.0,65.3 601.8,66.8 591.7,68.3 589.2,67.9ZM484.1,201.5 485.9,198.7 488.2,197.7 489.9,198.4 489.2,200.7 489.7,203.2 487.9,205.0 485.2,204.5 483.6,203.0ZM477.3,207.0 478.6,207.0 480.9,213.8 482.6,219.9 481.4,220.7 478.6,215.9 477.1,210.8ZM489.7,222.7 491.2,225.3 493.0,235.1 491.7,234.8 490.2,229.2 489.4,224.0Z" fill="#cad2d3"/></g><g fill-opacity="0.85"><circle cx="204.4" cy="73.3" r="4.6" fill="#ef573c"/><circle cx="218.6" cy="82.2" r="4.6" fill="#ef573c"/><circle cx="213.8" cy="86.2" r="4.6" fill="#8c4a3e"/><circle cx="200.2" cy="137.3" r="4.6" fill="#673f39"/><circle cx="154.4" cy="145.2" r="4.6" fill="#8c4a3e"/><circle cx="178.5" cy="157.3" r="4.6" fill="#bf3a26"/><circle cx="179.2" cy="161.2" r="4.6" fill="#bf3a26"/><circle cx="185.2" cy="160.5" r="4.6" fill="#d84f38"/><circle cx="191.5" cy="169.4" r="4.6" fill="#b04f3b"/><circle cx="227.3" cy="146.3" r="4.6" fill="#d84f38"/><circle cx="236.3" cy="149.4" r="4.6" fill="#b04f3b"/><circle cx="245.1" cy="149.0" r="4.6" fill="#b04f3b"/><circle cx="248.5" cy="154.2" r="4.6" fill="#b04f3b"/><circle cx="250.4" cy="158.1" r="4.6" fill="#b04f3b"/><circle cx="255.1" cy="162.5" r="4.6" fill="#8c4a3e"/><circle cx="249.3" cy="164.4" r="4.6" fill="#bf3a26"/><circle cx="250.4" cy="169.1" r="4.6" fill="#d84f38"/><circle cx="230.4" cy="164.1" r="4.6" fill="#bf3a26"/><circle cx="232.8" cy="166.0" r="4.6" fill="#bf3a26"/><circle cx="235.5" cy="170.4" r="4.6" fill="#673f39"/><circle cx="219.4" cy="177.3" r="4.6" fill="#8c4a3e"/><circle cx="272.2" cy="183.3" r="4.6" fill="#673f39"/><circle cx="206.3" cy="196.2" r="4.6" fill="#ef573c"/><circle cx="291.4" cy="200.3" r="4.6" fill="#ef573c"/><circle cx="215.5" cy="213.2" r="4.6" fill="#8c4a3e"/><circle cx="244.4" cy="241.4" r="4.6" fill="#673f39"/><circle cx="258.4" cy="261.4" r="4.6" fill="#b04f3b"/><circle cx="226.3" cy="285.3" r="4.6" fill="#ef573c"/><circle cx="256.2" cy="288.5" r="4.6" fill="#b04f3b"/><circle cx="262.5" cy="288.5" r="4.6" fill="#d84f38"/><circle cx="449.4" cy="9.1" r="4.6" fill="#ef573c"/><circle cx="479.3" cy="6.3" r="4.6" fill="#8c4a3e"/><circle cx="429.4" cy="26.3" r="4.6" fill="#d84f38"/><circle cx="467.2" cy="30.2" r="4.6" fill="#d84f38"/><circle cx="388.0" cy="36.2" r="4.6" fill="#ef573c"/><circle cx="402.5" cy="38.1" r="4.6" fill="#ef573c"/><circle cx="416.3" cy="40.2" r="4.6" fill="#ef573c"/><circle cx="417.1" cy="46.9" r="4.6" fill="#d84f38"/><circle cx="419.5" cy="51.7" r="4.6" fill="#8c4a3e"/><circle cx="480.1" cy="48.3" r="4.6" fill="#b04f3b"/><circle cx="432.1" cy="54.3" r="4.6" fill="#ef573c"/><circle cx="437.3" cy="50.7" r="4.6" fill="#d84f38"/><circle cx="454.1" cy="49.1" r="4.6" fill="#ef573c"/><circle cx="448.6" cy="53.5" r="4.6" fill="#d84f38"/><circle cx="443.9" cy="57.5" r="4.6" fill="#ef573c"/><circle cx="452.1" cy="60.3" r="4.6" fill="#673f39"/><circle cx="425.3" cy="60.3" r="4.6" fill="#ef573c"/><circle cx="415.2" cy="65.0" r="4.6" fill="#ef573c"/><circle cx="433.7" cy="67.4" r="4.6" fill="#ef573c"/><circle cx="440.3" cy="66.5" r="4.6" fill="#bf3a26"/><circle cx="451.8" cy="77.2" r="4.6" fill="#b04f3b"/><circle cx="457.3" cy="78.7" r="4.6" fill="#bf3a26"/><circle cx="462.5" cy="76.4" r="4.6" fill="#8c4a3e"/><circle cx="391.4" cy="80.3" r="4.6" fill="#ef573c"/><circle cx="382.2" cy="87.4" r="4.6" fill="#d84f38"/><circle cx="411.6" cy="96.4" r="4.6" fill="#673f39"/><circle cx="430.5" cy="102.4" r="4.6" fill="#d84f38"/><circle cx="463.6" cy="92.6" r="4.6" fill="#8c4a3e"/><circle cx="485.3" cy="92.1" r="4.6" fill="#673f39"/><circle cx="516.3" cy="80.3" r="4.6" fill="#b04f3b"/><circle cx="494.3" cy="110.2" r="4.6" fill="#673f39"/><circle cx="491.1" cy="114.6" r="4.6" fill="#ef573c"/><circle cx="524.2" cy="118.3" r="4.6" fill="#8c4a3e"/><circle cx="530.6" cy="126.8" r="4.6" fill="#673f39"/><circle cx="532.5" cy="129.1" r="4.6" fill="#673f39"/><circle cx="546.3" cy="133.4" r="4.6" fill="#b04f3b"/><circle cx="572.3" cy="131.5" r="4.6" fill="#ef573c"/><circle cx="618.3" cy="123.3" r="4.6" fill="#8c4a3e"/><circle cx="631.4" cy="134.3" r="4.6" fill="#d84f38"/><circle cx="598.3" cy="162.2" r="4.6" fill="#ef573c"/><circle cx="606.5" cy="180.3" r="4.6" fill="#673f39"/><circle cx="645.5" cy="153.5" r="4.6" fill="#8c4a3e"/><circle cx="656.1" cy="160.3" r="4.6" fill="#ef573c"/><circle cx="667.1" cy="160.9" r="4.6" fill="#8c4a3e"/><circle cx="672.3" cy="168.2" r="4.6" fill="#673f39"/><circle cx="690.3" cy="138.3" r="4.6" fill="#ef573c"/><circle cx="707.3" cy="133.4" r="4.6" fill="#b04f3b"/><circle cx="708.9" cy="113.4" r="4.6" fill="#ef573c"/><circle cx="692.3" cy="183.0" r="4.6" fill="#673f39"/><circle cx="664.4" cy="192.3" r="4.6" fill="#ef573c"/><circle cx="681.3" cy="191.0" r="4.6" fill="#b04f3b"/><circle cx="672.3" cy="211.5" r="4.6" fill="#bf3a26"/><circle cx="725.4" cy="100.0" r="4.6" fill="#ef573c"/><circle cx="753.4" cy="96.1" r="4.6" fill="#ef573c"/><circle cx="719.4" cy="177.3" r="4.6" fill="#8c4a3e"/><circle cx="751.4" cy="171.3" r="4.6" fill="#b04f3b"/><circle cx="834.1" cy="177.3" r="4.6" fill="#8c4a3e"/><circle cx="719.4" cy="217.3" r="4.6" fill="#673f39"/><circle cx="822.3" cy="253.3" r="4.6" fill="#8c4a3e"/><circle cx="752.2" cy="289.3" r="4.6" fill="#ef573c"/><circle cx="359.3" cy="158.2" r="4.6" fill="#ef573c"/><circle cx="369.4" cy="171.2" r="4.6" fill="#8c4a3e"/><circle cx="422.2" cy="172.4" r="4.6" fill="#8c4a3e"/><circle cx="429.5" cy="185.0" r="4.6" fill="#ef573c"/><circle cx="442.5" cy="206.2" r="4.6" fill="#673f39"/><circle cx="496.2" cy="199.2" r="4.6" fill="#b04f3b"/><circle cx="474.3" cy="228.2" r="4.6" fill="#8c4a3e"/><circle cx="517.4" cy="228.2" r="4.6" fill="#8c4a3e"/><circle cx="548.3" cy="246.0" r="4.6" fill="#673f39"/><circle cx="451.6" cy="253.4" r="4.6" fill="#ef573c"/><circle cx="468.5" cy="259.4" r="4.6" fill="#d84f38"/><circle cx="450.3" cy="286.4" r="4.6" fill="#d84f38"/></g></svg></div><!--mapend-->

<div class="abs h2" style="left:937px;width:600px;top:298px">Relative Variant Genome Frequency per Region</div>
<div class="abs h2" style="left:937px;width:600px;top:328px">(exponentially smoothed alpha=0.3)</div>
<div class="abs sub" style="left:937px;width:600px;top:366px;color:#888">Click Legend to show/hide series</div>

<!--chart--><svg class="abs" style="left:930px;top:380px" width="622" height="366" viewBox="930 380 622 366" font-family="Liberation Sans" ><line x1="1005" y1="615.9" x2="1367" y2="615.9" stroke="#d4d4d4" stroke-width="1"/><line x1="1005" y1="563.6" x2="1367" y2="563.6" stroke="#d4d4d4" stroke-width="1"/><line x1="1005" y1="511.2" x2="1367" y2="511.2" stroke="#d4d4d4" stroke-width="1"/><line x1="1005" y1="458.9" x2="1367" y2="458.9" stroke="#d4d4d4" stroke-width="1"/><line x1="1005" y1="406.5" x2="1367" y2="406.5" stroke="#d4d4d4" stroke-width="1"/><line x1="999" y1="668.3" x2="1005" y2="668.3" stroke="#555" stroke-width="1"/><text x="994" y="673.6" font-size="15" fill="#333" text-anchor="end">0</text><line x1="999" y1="615.9" x2="1005" y2="615.9" stroke="#555" stroke-width="1"/><text x="994" y="621.2" font-size="15" fill="#333" text-anchor="end">20</text><line x1="999" y1="563.6" x2="1005" y2="563.6" stroke="#555" stroke-width="1"/><text x="994" y="568.9" font-size="15" fill="#333" text-anchor="end">40</text><line x1="999" y1="511.2" x2="1005" y2="511.2" stroke="#555" stroke-width="1"/><text x="994" y="516.5" font-size="15" fill="#333" text-anchor="end">60</text><line x1="999" y1="458.9" x2="1005" y2="458.9" stroke="#555" stroke-width="1"/><text x="994" y="464.2" font-size="15" fill="#333" text-anchor="end">80</text><line x1="999" y1="406.5" x2="1005" y2="406.5" stroke="#555" stroke-width="1"/><text x="994" y="411.8" font-size="15" fill="#333" text-anchor="end">100</text><line x1="1004.5" y1="406" x2="1004.5" y2="668.5" stroke="#555" stroke-width="1.3"/><line x1="1004" y1="668.8" x2="1367.5" y2="668.8" stroke="#555" stroke-width="1.3"/><line x1="1106.0" y1="668" x2="1106.0" y2="674" stroke="#555" stroke-width="1.2"/><line x1="1228.0" y1="668" x2="1228.0" y2="674" stroke="#555" stroke-width="1.2"/><line x1="1350.0" y1="668" x2="1350.0" y2="674" stroke="#555" stroke-width="1.2"/><line x1="1367.0" y1="668" x2="1367.0" y2="674" stroke="#555" stroke-width="1.2"/><text x="1114.5" y="690" font-size="16" fill="#333" text-anchor="middle">2023-11-06</text><text x="1236.0" y="690" font-size="16" fill="#333" text-anchor="middle">2023-12-25</text><text x="1358.0" y="690" font-size="16" fill="#333" text-anchor="middle">2024-02-12</text><text x="1184" y="712" font-size="16" fill="#333" text-anchor="middle">Date</text><text x="0" y="0" transform="translate(965,537) rotate(-90)" font-size="16" fill="#333" text-anchor="middle">Smoothed Percentage (%)</text><polyline points="1010.3,668.3 1027.7,668.3 1045.1,668.3 1062.5,667.5 1079.9,666.2 1097.3,663.6 1114.7,659.7 1132.1,654.7 1149.5,646.0 1166.9,630.3 1184.3,612.8 1201.7,590.5 1219.1,569.1 1236.5,545.5 1253.9,524.6 1271.3,505.7 1288.7,489.0 1306.1,474.6 1323.5,465.4 1340.9,459.4 1358.3,457.3" fill="none" stroke="#c23531" stroke-width="2.4" stroke-linejoin="round"/><polyline points="1010.3,667.8 1027.7,667.8 1045.1,667.8 1062.5,667.3 1079.9,666.2 1097.3,664.1 1114.7,660.7 1132.1,656.0 1149.5,647.9 1166.9,634.3 1184.3,617.5 1201.7,596.8 1219.1,575.1 1236.5,552.1 1253.9,531.1 1271.3,512.5 1288.7,495.8 1306.1,480.1 1323.5,466.2 1340.9,454.4 1358.3,453.6" fill="none" stroke="#2f4554" stroke-width="2.4" stroke-linejoin="round"/><polyline points="1010.3,666.2 1027.7,667.0 1045.1,667.3 1062.5,667.3 1079.9,667.0 1097.3,666.5 1114.7,665.7 1132.1,663.1 1149.5,655.2 1166.9,636.9 1184.3,611.5 1201.7,597.4 1219.1,604.9 1236.5,555.2 1253.9,541.9 1271.3,547.9 1288.7,539.0 1306.1,518.3 1323.5,495.8 1340.9,477.2 1358.3,468.3" fill="none" stroke="#61a0a8" stroke-width="2.4" stroke-linejoin="round"/><polyline points="1010.3,667.8 1027.7,667.8 1045.1,667.5 1062.5,666.2 1079.9,663.3 1097.3,659.7 1114.7,654.2 1132.1,646.0 1149.5,633.2 1166.9,614.6 1184.3,593.2 1201.7,570.9 1219.1,546.0 1236.5,523.3 1253.9,505.7 1271.3,492.1 1288.7,479.5 1306.1,467.0 1323.5,460.4 1340.9,454.4 1358.3,456.5" fill="none" stroke="#d48265" stroke-width="2.4" stroke-linejoin="round"/><polyline points="1010.3,667.5 1027.7,667.5 1045.1,667.5 1062.5,667.5 1079.9,667.3 1097.3,666.7 1114.7,665.7 1132.1,663.1 1149.5,656.5 1166.9,638.2 1184.3,617.2 1201.7,600.5 1219.1,587.4 1236.5,571.4 1253.9,556.0 1271.3,541.1 1288.7,530.1 1306.1,511.5 1323.5,489.8 1340.9,465.4 1358.3,453.6" fill="none" stroke="#91c7ae" stroke-width="2.4" stroke-linejoin="round"/><polyline points="1010.3,667.0 1027.7,667.3 1045.1,667.3 1062.5,667.3 1079.9,667.0 1097.3,666.2 1114.7,665.2 1132.1,664.4 1149.5,660.2 1166.9,651.3 1184.3,641.1 1201.7,626.9 1219.1,607.8 1236.5,586.1 1253.9,565.2 1271.3,541.9 1288.7,521.2 1306.1,506.5 1323.5,490.8 1340.9,479.0 1358.3,468.3" fill="none" stroke="#749f83" stroke-width="2.4" stroke-linejoin="round"/><polyline points="1010.3,668.0 1027.7,668.0 1045.1,668.0 1062.5,667.8 1079.9,667.0 1097.3,665.7 1114.7,663.6 1132.1,661.8 1149.5,658.4 1166.9,648.9 1184.3,635.6 1201.7,617.5 1219.1,593.9 1236.5,569.1 1253.9,544.7 1271.3,519.3 1288.7,498.1 1306.1,480.1 1323.5,464.4 1340.9,451.5 1358.3,443.2" fill="none" stroke="#ca8622" stroke-width="2.4" stroke-linejoin="round"/><polyline points="1010.3,667.8 1027.7,667.8 1045.1,667.8 1062.5,667.5 1079.9,666.7 1097.3,665.2 1114.7,662.5 1132.1,659.1 1149.5,654.4 1166.9,637.7 1184.3,624.1 1201.7,604.9 1219.1,581.4 1236.5,561.2 1253.9,540.8 1271.3,527.2 1288.7,514.9 1306.1,502.6 1323.5,483.5 1340.9,461.5 1358.3,446.6" fill="none" stroke="#bda29a" stroke-width="2.4" stroke-linejoin="round"/><circle cx="1010.3" cy="668.3" r="2.7" fill="#fff" stroke="#c23531" stroke-width="1.4"/><circle cx="1027.7" cy="668.3" r="2.7" fill="#fff" stroke="#c23531" stroke-width="1.4"/><circle cx="1045.1" cy="668.3" r="2.7" fill="#fff" stroke="#c23531" stroke-width="1.4"/><circle cx="1062.5" cy="667.5" r="2.7" fill="#fff" stroke="#c23531" stroke-width="1.4"/><circle cx="1079.9" cy="666.2" r="2.7" fill="#fff" stroke="#c23531" stroke-width="1.4"/><circle cx="1097.3" cy="663.6" r="2.7" fill="#fff" stroke="#c23531" stroke-width="1.4"/><circle cx="1114.7" cy="659.7" r="2.7" fill="#fff" stroke="#c23531" stroke-width="1.4"/><circle cx="1132.1" cy="654.7" r="2.7" fill="#fff" stroke="#c23531" stroke-width="1.4"/><circle cx="1149.5" cy="646.0" r="2.7" fill="#fff" stroke="#c23531" stroke-width="1.4"/><circle cx="1166.9" cy="630.3" r="2.7" fill="#fff" stroke="#c23531" stroke-width="1.4"/><circle cx="1184.3" cy="612.8" r="2.7" fill="#fff" stroke="#c23531" stroke-width="1.4"/><circle cx="1201.7" cy="590.5" r="2.7" fill="#fff" stroke="#c23531" stroke-width="1.4"/><circle cx="1219.1" cy="569.1" r="2.7" fill="#fff" stroke="#c23531" stroke-width="1.4"/><circle cx="1236.5" cy="545.5" r="2.7" fill="#fff" stroke="#c23531" stroke-width="1.4"/><circle cx="1253.9" cy="524.6" r="2.7" fill="#fff" stroke="#c23531" stroke-width="1.4"/><circle cx="1271.3" cy="505.7" r="2.7" fill="#fff" stroke="#c23531" stroke-width="1.4"/><circle cx="1288.7" cy="489.0" r="2.7" fill="#fff" stroke="#c23531" stroke-width="1.4"/><circle cx="1306.1" cy="474.6" r="2.7" fill="#fff" stroke="#c23531" stroke-width="1.4"/><circle cx="1323.5" cy="465.4" r="2.7" fill="#fff" stroke="#c23531" stroke-width="1.4"/><circle cx="1340.9" cy="459.4" r="2.7" fill="#fff" stroke="#c23531" stroke-width="1.4"/><circle cx="1358.3" cy="457.3" r="2.7" fill="#fff" stroke="#c23531" stroke-width="1.4"/><circle cx="1010.3" cy="667.8" r="2.7" fill="#fff" stroke="#2f4554" stroke-width="1.4"/><circle cx="1027.7" cy="667.8" r="2.7" fill="#fff" stroke="#2f4554" stroke-width="1.4"/><circle cx="1045.1" cy="667.8" r="2.7" fill="#fff" stroke="#2f4554" stroke-width="1.4"/><circle cx="1062.5" cy="667.3" r="2.7" fill="#fff" stroke="#2f4554" stroke-width="1.4"/><circle cx="1079.9" cy="666.2" r="2.7" fill="#fff" stroke="#2f4554" stroke-width="1.4"/><circle cx="1097.3" cy="664.1" r="2.7" fill="#fff" stroke="#2f4554" stroke-width="1.4"/><circle cx="1114.7" cy="660.7" r="2.7" fill="#fff" stroke="#2f4554" stroke-width="1.4"/><circle cx="1132.1" cy="656.0" r="2.7" fill="#fff" stroke="#2f4554" stroke-width="1.4"/><circle cx="1149.5" cy="647.9" r="2.7" fill="#fff" stroke="#2f4554" stroke-width="1.4"/><circle cx="1166.9" cy="634.3" r="2.7" fill="#fff" stroke="#2f4554" stroke-width="1.4"/><circle cx="1184.3" cy="617.5" r="2.7" fill="#fff" stroke="#2f4554" stroke-width="1.4"/><circle cx="1201.7" cy="596.8" r="2.7" fill="#fff" stroke="#2f4554" stroke-width="1.4"/><circle cx="1219.1" cy="575.1" r="2.7" fill="#fff" stroke="#2f4554" stroke-width="1.4"/><circle cx="1236.5" cy="552.1" r="2.7" fill="#fff" stroke="#2f4554" stroke-width="1.4"/><circle cx="1253.9" cy="531.1" r="2.7" fill="#fff" stroke="#2f4554" stroke-width="1.4"/><circle cx="1271.3" cy="512.5" r="2.7" fill="#fff" stroke="#2f4554" stroke-width="1.4"/><circle cx="1288.7" cy="495.8" r="2.7" fill="#fff" stroke="#2f4554" stroke-width="1.4"/><circle cx="1306.1" cy="480.1" r="2.7" fill="#fff" stroke="#2f4554" stroke-width="1.4"/><circle cx="1323.5" cy="466.2" r="2.7" fill="#fff" stroke="#2f4554" stroke-width="1.4"/><circle cx="1340.9" cy="454.4" r="2.7" fill="#fff" stroke="#2f4554" stroke-width="1.4"/><circle cx="1358.3" cy="453.6" r="2.7" fill="#fff" stroke="#2f4554" stroke-width="1.4"/><circle cx="1010.3" cy="666.2" r="2.7" fill="#fff" stroke="#61a0a8" stroke-width="1.4"/><circle cx="1027.7" cy="667.0" r="2.7" fill="#fff" stroke="#61a0a8" stroke-width="1.4"/><circle cx="1045.1" cy="667.3" r="2.7" fill="#fff" stroke="#61a0a8" stroke-width="1.4"/><circle cx="1062.5" cy="667.3" r="2.7" fill="#fff" stroke="#61a0a8" stroke-width="1.4"/><circle cx="1079.9" cy="667.0" r="2.7" fill="#fff" stroke="#61a0a8" stroke-width="1.4"/><circle cx="1097.3" cy="666.5" r="2.7" fill="#fff" stroke="#61a0a8" stroke-width="1.4"/><circle cx="1114.7" cy="665.7" r="2.7" fill="#fff" stroke="#61a0a8" stroke-width="1.4"/><circle cx="1132.1" cy="663.1" r="2.7" fill="#fff" stroke="#61a0a8" stroke-width="1.4"/><circle cx="1149.5" cy="655.2" r="2.7" fill="#fff" stroke="#61a0a8" stroke-width="1.4"/><circle cx="1166.9" cy="636.9" r="2.7" fill="#fff" stroke="#61a0a8" stroke-width="1.4"/><circle cx="1184.3" cy="611.5" r="2.7" fill="#fff" stroke="#61a0a8" stroke-width="1.4"/><circle cx="1201.7" cy="597.4" r="2.7" fill="#fff" stroke="#61a0a8" stroke-width="1.4"/><circle cx="1219.1" cy="604.9" r="2.7" fill="#fff" stroke="#61a0a8" stroke-width="1.4"/><circle cx="1236.5" cy="555.2" r="2.7" fill="#fff" stroke="#61a0a8" stroke-width="1.4"/><circle cx="1253.9" cy="541.9" r="2.7" fill="#fff" stroke="#61a0a8" stroke-width="1.4"/><circle cx="1271.3" cy="547.9" r="2.7" fill="#fff" stroke="#61a0a8" stroke-width="1.4"/><circle cx="1288.7" cy="539.0" r="2.7" fill="#fff" stroke="#61a0a8" stroke-width="1.4"/><circle cx="1306.1" cy="518.3" r="2.7" fill="#fff" stroke="#61a0a8" stroke-width="1.4"/><circle cx="1323.5" cy="495.8" r="2.7" fill="#fff" stroke="#61a0a8" stroke-width="1.4"/><circle cx="1340.9" cy="477.2" r="2.7" fill="#fff" stroke="#61a0a8" stroke-width="1.4"/><circle cx="1358.3" cy="468.3" r="2.7" fill="#fff" stroke="#61a0a8" stroke-width="1.4"/><circle cx="1010.3" cy="667.8" r="2.7" fill="#fff" stroke="#d48265" stroke-width="1.4"/><circle cx="1027.7" cy="667.8" r="2.7" fill="#fff" stroke="#d48265" stroke-width="1.4"/><circle cx="1045.1" cy="667.5" r="2.7" fill="#fff" stroke="#d48265" stroke-width="1.4"/><circle cx="1062.5" cy="666.2" r="2.7" fill="#fff" stroke="#d48265" stroke-width="1.4"/><circle cx="1079.9" cy="663.3" r="2.7" fill="#fff" stroke="#d48265" stroke-width="1.4"/><circle cx="1097.3" cy="659.7" r="2.7" fill="#fff" stroke="#d48265" stroke-width="1.4"/><circle cx="1114.7" cy="654.2" r="2.7" fill="#fff" stroke="#d48265" stroke-width="1.4"/><circle cx="1132.1" cy="646.0" r="2.7" fill="#fff" stroke="#d48265" stroke-width="1.4"/><circle cx="1149.5" cy="633.2" r="2.7" fill="#fff" stroke="#d48265" stroke-width="1.4"/><circle cx="1166.9" cy="614.6" r="2.7" fill="#fff" stroke="#d48265" stroke-width="1.4"/><circle cx="1184.3" cy="593.2" r="2.7" fill="#fff" stroke="#d48265" stroke-width="1.4"/><circle cx="1201.7" cy="570.9" r="2.7" fill="#fff" stroke="#d48265" stroke-width="1.4"/><circle cx="1219.1" cy="546.0" r="2.7" fill="#fff" stroke="#d48265" stroke-width="1.4"/><circle cx="1236.5" cy="523.3" r="2.7" fill="#fff" stroke="#d48265" stroke-width="1.4"/><circle cx="1253.9" cy="505.7" r="2.7" fill="#fff" stroke="#d48265" stroke-width="1.4"/><circle cx="1271.3" cy="492.1" r="2.7" fill="#fff" stroke="#d48265" stroke-width="1.4"/><circle cx="1288.7" cy="479.5" r="2.7" fill="#fff" stroke="#d48265" stroke-width="1.4"/><circle cx="1306.1" cy="467.0" r="2.7" fill="#fff" stroke="#d48265" stroke-width="1.4"/><circle cx="1323.5" cy="460.4" r="2.7" fill="#fff" stroke="#d48265" stroke-width="1.4"/><circle cx="1340.9" cy="454.4" r="2.7" fill="#fff" stroke="#d48265" stroke-width="1.4"/><circle cx="1358.3" cy="456.5" r="2.7" fill="#fff" stroke="#d48265" stroke-width="1.4"/><circle cx="1010.3" cy="667.5" r="2.7" fill="#fff" stroke="#91c7ae" stroke-width="1.4"/><circle cx="1027.7" cy="667.5" r="2.7" fill="#fff" stroke="#91c7ae" stroke-width="1.4"/><circle cx="1045.1" cy="667.5" r="2.7" fill="#fff" stroke="#91c7ae" stroke-width="1.4"/><circle cx="1062.5" cy="667.5" r="2.7" fill="#fff" stroke="#91c7ae" stroke-width="1.4"/><circle cx="1079.9" cy="667.3" r="2.7" fill="#fff" stroke="#91c7ae" stroke-width="1.4"/><circle cx="1097.3" cy="666.7" r="2.7" fill="#fff" stroke="#91c7ae" stroke-width="1.4"/><circle cx="1114.7" cy="665.7" r="2.7" fill="#fff" stroke="#91c7ae" stroke-width="1.4"/><circle cx="1132.1" cy="663.1" r="2.7" fill="#fff" stroke="#91c7ae" stroke-width="1.4"/><circle cx="1149.5" cy="656.5" r="2.7" fill="#fff" stroke="#91c7ae" stroke-width="1.4"/><circle cx="1166.9" cy="638.2" r="2.7" fill="#fff" stroke="#91c7ae" stroke-width="1.4"/><circle cx="1184.3" cy="617.2" r="2.7" fill="#fff" stroke="#91c7ae" stroke-width="1.4"/><circle cx="1201.7" cy="600.5" r="2.7" fill="#fff" stroke="#91c7ae" stroke-width="1.4"/><circle cx="1219.1" cy="587.4" r="2.7" fill="#fff" stroke="#91c7ae" stroke-width="1.4"/><circle cx="1236.5" cy="571.4" r="2.7" fill="#fff" stroke="#91c7ae" stroke-width="1.4"/><circle cx="1253.9" cy="556.0" r="2.7" fill="#fff" stroke="#91c7ae" stroke-width="1.4"/><circle cx="1271.3" cy="541.1" r="2.7" fill="#fff" stroke="#91c7ae" stroke-width="1.4"/><circle cx="1288.7" cy="530.1" r="2.7" fill="#fff" stroke="#91c7ae" stroke-width="1.4"/><circle cx="1306.1" cy="511.5" r="2.7" fill="#fff" stroke="#91c7ae" stroke-width="1.4"/><circle cx="1323.5" cy="489.8" r="2.7" fill="#fff" stroke="#91c7ae" stroke-width="1.4"/><circle cx="1340.9" cy="465.4" r="2.7" fill="#fff" stroke="#91c7ae" stroke-width="1.4"/><circle cx="1358.3" cy="453.6" r="2.7" fill="#fff" stroke="#91c7ae" stroke-width="1.4"/><circle cx="1010.3" cy="667.0" r="2.7" fill="#fff" stroke="#749f83" stroke-width="1.4"/><circle cx="1027.7" cy="667.3" r="2.7" fill="#fff" stroke="#749f83" stroke-width="1.4"/><circle cx="1045.1" cy="667.3" r="2.7" fill="#fff" stroke="#749f83" stroke-width="1.4"/><circle cx="1062.5" cy="667.3" r="2.7" fill="#fff" stroke="#749f83" stroke-width="1.4"/><circle cx="1079.9" cy="667.0" r="2.7" fill="#fff" stroke="#749f83" stroke-width="1.4"/><circle cx="1097.3" cy="666.2" r="2.7" fill="#fff" stroke="#749f83" stroke-width="1.4"/><circle cx="1114.7" cy="665.2" r="2.7" fill="#fff" stroke="#749f83" stroke-width="1.4"/><circle cx="1132.1" cy="664.4" r="2.7" fill="#fff" stroke="#749f83" stroke-width="1.4"/><circle cx="1149.5" cy="660.2" r="2.7" fill="#fff" stroke="#749f83" stroke-width="1.4"/><circle cx="1166.9" cy="651.3" r="2.7" fill="#fff" stroke="#749f83" stroke-width="1.4"/><circle cx="1184.3" cy="641.1" r="2.7" fill="#fff" stroke="#749f83" stroke-width="1.4"/><circle cx="1201.7" cy="626.9" r="2.7" fill="#fff" stroke="#749f83" stroke-width="1.4"/><circle cx="1219.1" cy="607.8" r="2.7" fill="#fff" stroke="#749f83" stroke-width="1.4"/><circle cx="1236.5" cy="586.1" r="2.7" fill="#fff" stroke="#749f83" stroke-width="1.4"/><circle cx="1253.9" cy="565.2" r="2.7" fill="#fff" stroke="#749f83" stroke-width="1.4"/><circle cx="1271.3" cy="541.9" r="2.7" fill="#fff" stroke="#749f83" stroke-width="1.4"/><circle cx="1288.7" cy="521.2" r="2.7" fill="#fff" stroke="#749f83" stroke-width="1.4"/><circle cx="1306.1" cy="506.5" r="2.7" fill="#fff" stroke="#749f83" stroke-width="1.4"/><circle cx="1323.5" cy="490.8" r="2.7" fill="#fff" stroke="#749f83" stroke-width="1.4"/><circle cx="1340.9" cy="479.0" r="2.7" fill="#fff" stroke="#749f83" stroke-width="1.4"/><circle cx="1358.3" cy="468.3" r="2.7" fill="#fff" stroke="#749f83" stroke-width="1.4"/><circle cx="1010.3" cy="668.0" r="2.7" fill="#fff" stroke="#ca8622" stroke-width="1.4"/><circle cx="1027.7" cy="668.0" r="2.7" fill="#fff" stroke="#ca8622" stroke-width="1.4"/><circle cx="1045.1" cy="668.0" r="2.7" fill="#fff" stroke="#ca8622" stroke-width="1.4"/><circle cx="1062.5" cy="667.8" r="2.7" fill="#fff" stroke="#ca8622" stroke-width="1.4"/><circle cx="1079.9" cy="667.0" r="2.7" fill="#fff" stroke="#ca8622" stroke-width="1.4"/><circle cx="1097.3" cy="665.7" r="2.7" fill="#fff" stroke="#ca8622" stroke-width="1.4"/><circle cx="1114.7" cy="663.6" r="2.7" fill="#fff" stroke="#ca8622" stroke-width="1.4"/><circle cx="1132.1" cy="661.8" r="2.7" fill="#fff" stroke="#ca8622" stroke-width="1.4"/><circle cx="1149.5" cy="658.4" r="2.7" fill="#fff" stroke="#ca8622" stroke-width="1.4"/><circle cx="1166.9" cy="648.9" r="2.7" fill="#fff" stroke="#ca8622" stroke-width="1.4"/><circle cx="1184.3" cy="635.6" r="2.7" fill="#fff" stroke="#ca8622" stroke-width="1.4"/><circle cx="1201.7" cy="617.5" r="2.7" fill="#fff" stroke="#ca8622" stroke-width="1.4"/><circle cx="1219.1" cy="593.9" r="2.7" fill="#fff" stroke="#ca8622" stroke-width="1.4"/><circle cx="1236.5" cy="569.1" r="2.7" fill="#fff" stroke="#ca8622" stroke-width="1.4"/><circle cx="1253.9" cy="544.7" r="2.7" fill="#fff" stroke="#ca8622" stroke-width="1.4"/><circle cx="1271.3" cy="519.3" r="2.7" fill="#fff" stroke="#ca8622" stroke-width="1.4"/><circle cx="1288.7" cy="498.1" r="2.7" fill="#fff" stroke="#ca8622" stroke-width="1.4"/><circle cx="1306.1" cy="480.1" r="2.7" fill="#fff" stroke="#ca8622" stroke-width="1.4"/><circle cx="1323.5" cy="464.4" r="2.7" fill="#fff" stroke="#ca8622" stroke-width="1.4"/><circle cx="1340.9" cy="451.5" r="2.7" fill="#fff" stroke="#ca8622" stroke-width="1.4"/><circle cx="1358.3" cy="443.2" r="2.7" fill="#fff" stroke="#ca8622" stroke-width="1.4"/><circle cx="1010.3" cy="667.8" r="2.7" fill="#fff" stroke="#bda29a" stroke-width="1.4"/><circle cx="1027.7" cy="667.8" r="2.7" fill="#fff" stroke="#bda29a" stroke-width="1.4"/><circle cx="1045.1" cy="667.8" r="2.7" fill="#fff" stroke="#bda29a" stroke-width="1.4"/><circle cx="1062.5" cy="667.5" r="2.7" fill="#fff" stroke="#bda29a" stroke-width="1.4"/><circle cx="1079.9" cy="666.7" r="2.7" fill="#fff" stroke="#bda29a" stroke-width="1.4"/><circle cx="1097.3" cy="665.2" r="2.7" fill="#fff" stroke="#bda29a" stroke-width="1.4"/><circle cx="1114.7" cy="662.5" r="2.7" fill="#fff" stroke="#bda29a" stroke-width="1.4"/><circle cx="1132.1" cy="659.1" r="2.7" fill="#fff" stroke="#bda29a" stroke-width="1.4"/><circle cx="1149.5" cy="654.4" r="2.7" fill="#fff" stroke="#bda29a" stroke-width="1.4"/><circle cx="1166.9" cy="637.7" r="2.7" fill="#fff" stroke="#bda29a" stroke-width="1.4"/><circle cx="1184.3" cy="624.1" r="2.7" fill="#fff" stroke="#bda29a" stroke-width="1.4"/><circle cx="1201.7" cy="604.9" r="2.7" fill="#fff" stroke="#bda29a" stroke-width="1.4"/><circle cx="1219.1" cy="581.4" r="2.7" fill="#fff" stroke="#bda29a" stroke-width="1.4"/><circle cx="1236.5" cy="561.2" r="2.7" fill="#fff" stroke="#bda29a" stroke-width="1.4"/><circle cx="1253.9" cy="540.8" r="2.7" fill="#fff" stroke="#bda29a" stroke-width="1.4"/><circle cx="1271.3" cy="527.2" r="2.7" fill="#fff" stroke="#bda29a" stroke-width="1.4"/><circle cx="1288.7" cy="514.9" r="2.7" fill="#fff" stroke="#bda29a" stroke-width="1.4"/><circle cx="1306.1" cy="502.6" r="2.7" fill="#fff" stroke="#bda29a" stroke-width="1.4"/><circle cx="1323.5" cy="483.5" r="2.7" fill="#fff" stroke="#bda29a" stroke-width="1.4"/><circle cx="1340.9" cy="461.5" r="2.7" fill="#fff" stroke="#bda29a" stroke-width="1.4"/><circle cx="1358.3" cy="446.6" r="2.7" fill="#fff" stroke="#bda29a" stroke-width="1.4"/><line x1="1386" y1="404.0" x2="1416" y2="404.0" stroke="#c23531" stroke-width="1.6" opacity="0.9"/><circle cx="1401" cy="404.0" r="7" fill="#fff" stroke="#c23531" stroke-width="1.6" opacity="0.9"/><text x="1424" y="409.5" font-size="16" fill="#3a3a3a">Europe-UK</text><line x1="1386" y1="431.8" x2="1416" y2="431.8" stroke="#2f4554" stroke-width="1.6" opacity="0.9"/><circle cx="1401" cy="431.8" r="7" fill="#fff" stroke="#2f4554" stroke-width="1.6" opacity="0.9"/><text x="1424" y="437.3" font-size="16" fill="#3a3a3a">Global</text><line x1="1386" y1="459.6" x2="1416" y2="459.6" stroke="#61a0a8" stroke-width="1.6" opacity="0.9"/><circle cx="1401" cy="459.6" r="7" fill="#fff" stroke="#61a0a8" stroke-width="1.6" opacity="0.9"/><text x="1424" y="465.1" font-size="16" fill="#3a3a3a">Africa</text><line x1="1386" y1="487.4" x2="1416" y2="487.4" stroke="#d48265" stroke-width="1.6" opacity="0.9"/><circle cx="1401" cy="487.4" r="7" fill="#fff" stroke="#d48265" stroke-width="1.6" opacity="0.9"/><text x="1424" y="492.9" font-size="16" fill="#3a3a3a">Europe-noUK</text><line x1="1386" y1="515.2" x2="1416" y2="515.2" stroke="#91c7ae" stroke-width="1.6" opacity="0.9"/><circle cx="1401" cy="515.2" r="7" fill="#fff" stroke="#91c7ae" stroke-width="1.6" opacity="0.9"/><text x="1424" y="520.7" font-size="16" fill="#3a3a3a">SouthAmerica</text><line x1="1386" y1="543.0" x2="1416" y2="543.0" stroke="#749f83" stroke-width="1.6" opacity="0.9"/><circle cx="1401" cy="543.0" r="7" fill="#fff" stroke="#749f83" stroke-width="1.6" opacity="0.9"/><text x="1424" y="548.5" font-size="16" fill="#3a3a3a">Oceania</text><line x1="1386" y1="570.8" x2="1416" y2="570.8" stroke="#ca8622" stroke-width="1.6" opacity="0.9"/><circle cx="1401" cy="570.8" r="7" fill="#fff" stroke="#ca8622" stroke-width="1.6" opacity="0.9"/><text x="1424" y="576.3" font-size="16" fill="#3a3a3a">NorthAmerica</text><line x1="1386" y1="598.6" x2="1416" y2="598.6" stroke="#bda29a" stroke-width="1.6" opacity="0.9"/><circle cx="1401" cy="598.6" r="7" fill="#fff" stroke="#bda29a" stroke-width="1.6" opacity="0.9"/><text x="1424" y="604.1" font-size="16" fill="#3a3a3a">Asia</text><rect x="1005.5" y="721.5" width="364" height="40" fill="none" stroke="#d8d8d8" stroke-width="1"/><path d="M1328,721.5 L1370,721.5 L1370,746 L1328,746Z" fill="#d5dae6"/><circle cx="1328.0" cy="741" r="13.5" fill="#fff" style="filter:drop-shadow(1.5px 1px 1px rgba(0,0,0,.4))"/><rect x="1323.5" y="735.5" width="9" height="1.6" fill="#555"/><rect x="1323.5" y="742.2" width="9" height="1.6" fill="#555"/><circle cx="1369.8" cy="741" r="13.5" fill="#fff" style="filter:drop-shadow(1.5px 1px 1px rgba(0,0,0,.4))"/><rect x="1365.3" y="735.5" width="9" height="1.6" fill="#555"/><rect x="1365.3" y="742.2" width="9" height="1.6" fill="#555"/></svg><!--chartend-->
</body></html>
